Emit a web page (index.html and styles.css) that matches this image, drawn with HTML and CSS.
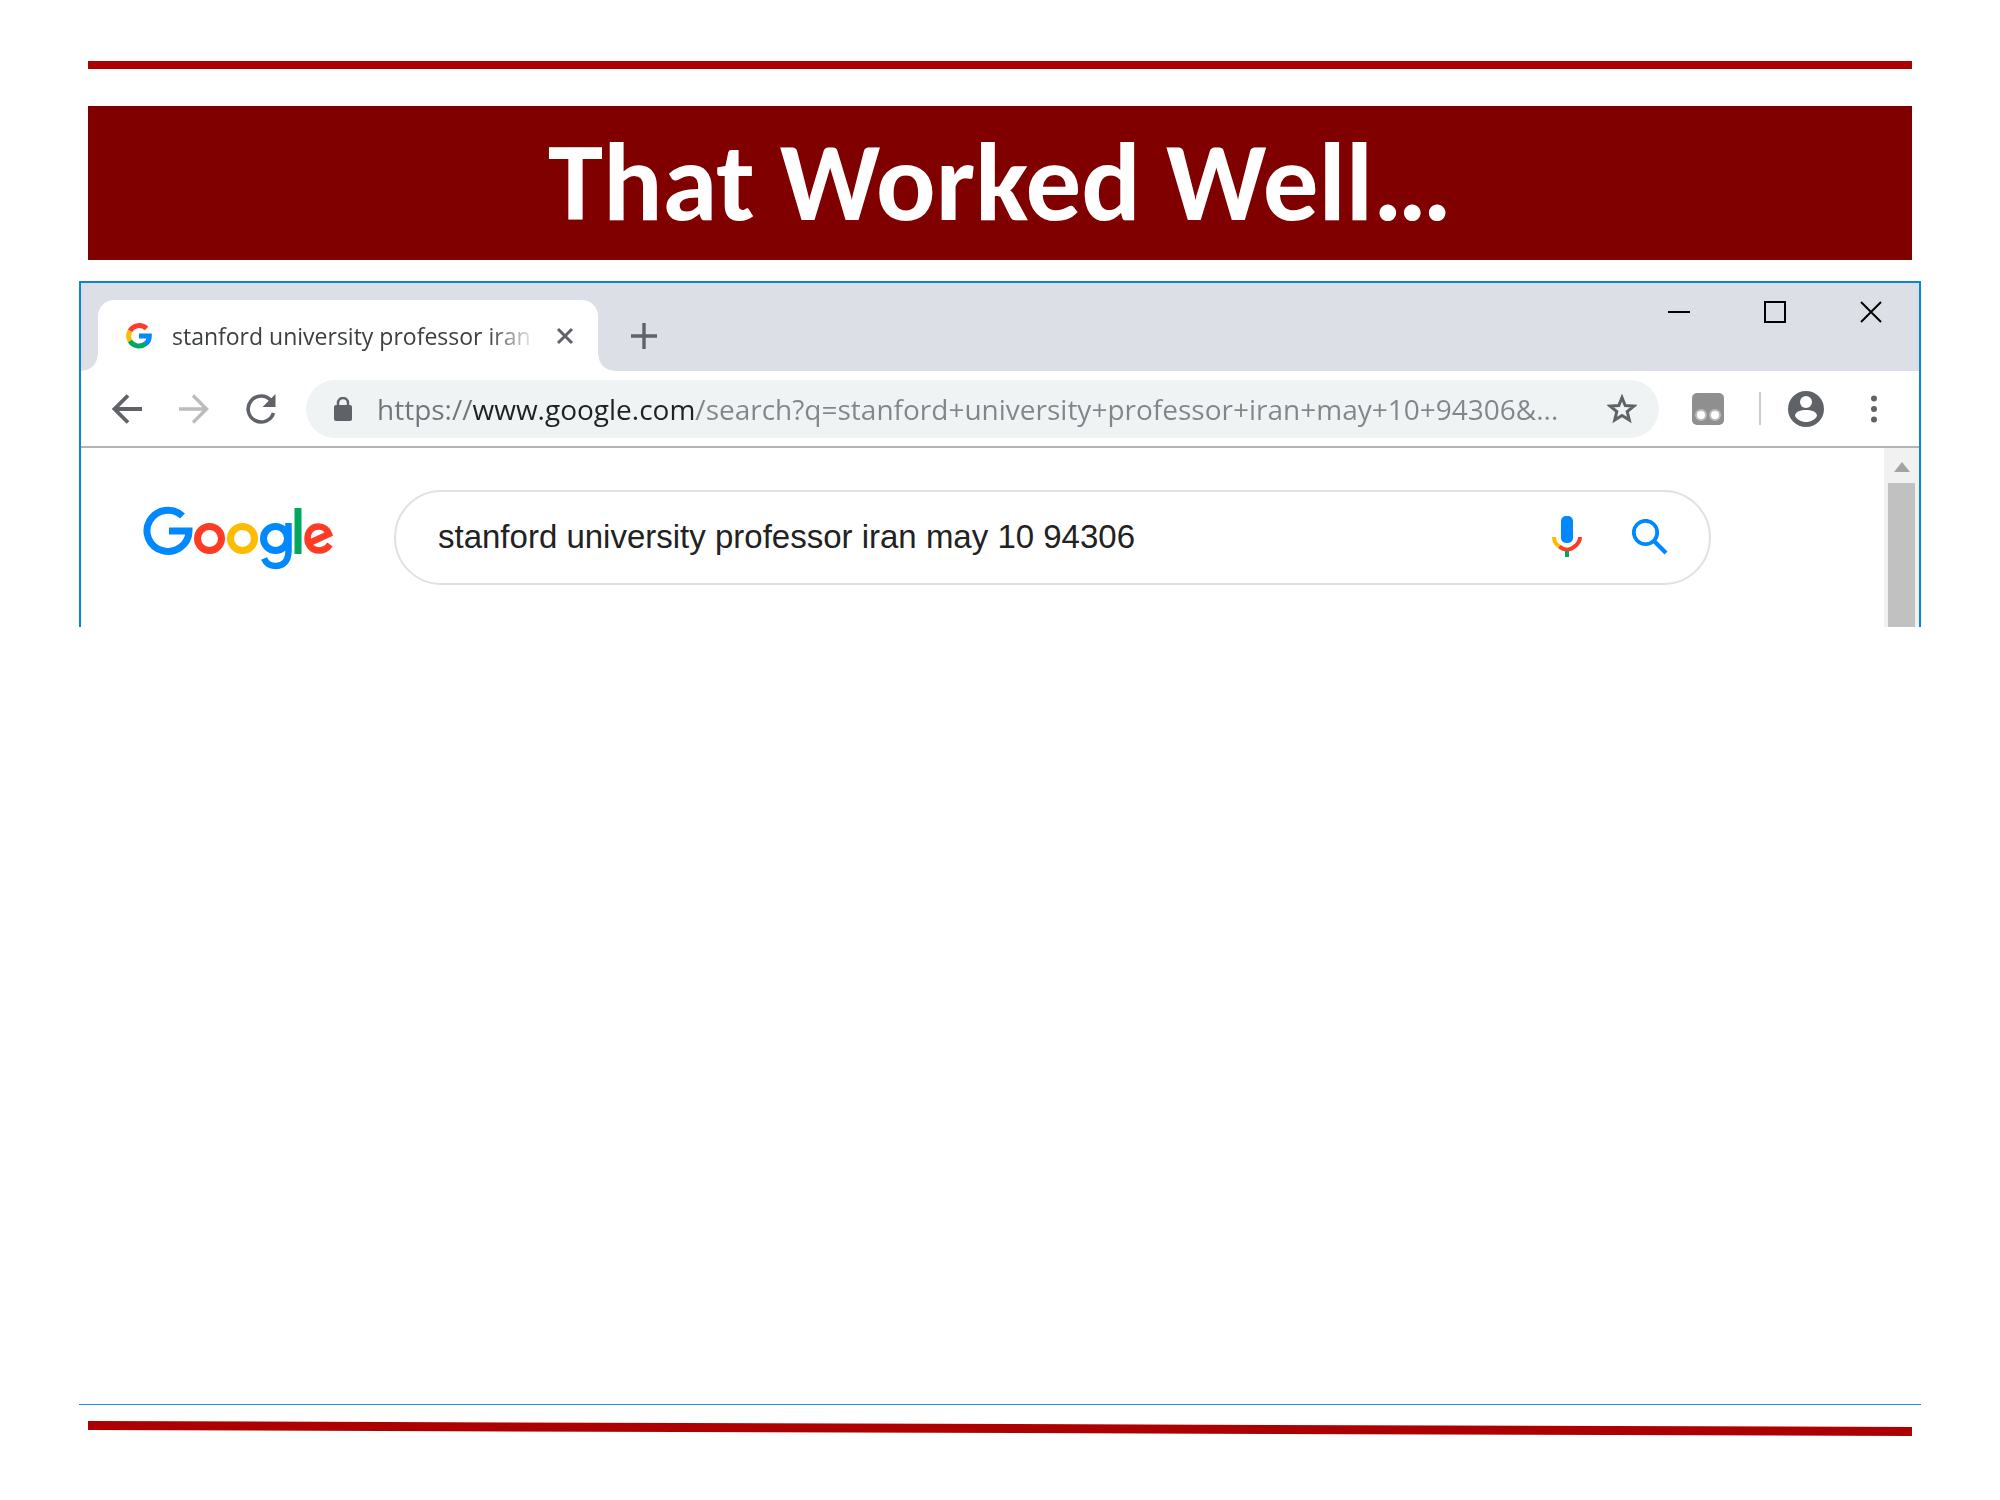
FILE: index.html
```
<!DOCTYPE html>
<html lang="en">
<head>
    <meta charset="UTF-8">
    <title>That Worked Well…</title>
    <link rel="stylesheet" href="styles.css">
</head>
<body>
    <main class="slide">
        <!-- Slide heading -->
        <header class="heading">
            <div class="rule"></div>
            <h1 class="title">That Worked Well…</h1>
        </header>

        <!-- Browser window -->
        <section class="browser">
            <div class="tabstrip">
                <div class="tab">
                    <svg class="favicon" viewBox="0 0 26 26" aria-hidden="true">
                        <g fill="none" stroke-width="5">
                            <path d="M4 8A10.500 10.500 0 0 1 20.500 5.500" stroke="#ff3b30"/>
                            <path d="M4 18A10.500 10.500 0 0 1 4 8" stroke="#fbbc05"/>
                            <path d="M4 18A10.500 10.500 0 0 0 19.500 20.800" stroke="#00a95c"/>
                            <path d="M13 13H23.300C23.300 17 21.800 19.500 19.200 21" stroke="#0088ff"/>
                        </g>
                    </svg>
                    <span class="tab-title">stanford university professor iran</span>
                    <button type="button" class="icon-btn tab-close" aria-label="Close tab">
                        <svg viewBox="0 0 18 18" width="18" height="18"><path d="M2 2L16 16M16 2L2 16" stroke="#5f6368" stroke-width="3"/></svg>
                    </button>
                </div>
                <button type="button" class="icon-btn new-tab" aria-label="New tab">
                    <svg viewBox="0 0 26 26" width="26" height="26"><path d="M13 0V26M0 13H26" stroke="#5f6368" stroke-width="3.400"/></svg>
                </button>
                <div class="window-controls">
                    <button type="button" class="icon-btn" aria-label="Minimize">
                        <svg viewBox="0 0 22 22" width="22" height="22"><path d="M0 11H22" stroke="#000" stroke-width="2"/></svg>
                    </button>
                    <button type="button" class="icon-btn" aria-label="Maximize">
                        <svg viewBox="0 0 22 22" width="22" height="22"><path d="M1 1H21V21H1Z" fill="none" stroke="#000" stroke-width="2"/></svg>
                    </button>
                    <button type="button" class="icon-btn" aria-label="Close">
                        <svg viewBox="0 0 22 22" width="22" height="22"><path d="M1 1L21 21M21 1L1 21" stroke="#000" stroke-width="2"/></svg>
                    </button>
                </div>
            </div>

            <div class="toolbar">
                <div class="nav">
                    <button type="button" class="icon-btn" aria-label="Back">
                        <svg viewBox="0 0 30 30" width="30" height="30"><path d="M30 15H3M16 1.500L2.500 15L16 28.500" fill="none" stroke="#5f6368" stroke-width="3.800"/></svg>
                    </button>
                    <button type="button" class="icon-btn" aria-label="Forward">
                        <svg viewBox="0 0 30 30" width="30" height="30"><path d="M0 15H27M14 1.500L27.500 15L14 28.500" fill="none" stroke="#babcbe" stroke-width="3.400"/></svg>
                    </button>
                    <button type="button" class="icon-btn" aria-label="Reload">
                        <svg viewBox="0 0 30 30" width="30" height="30"><path d="M27.500 19A13 13 0 1 1 25 6.500" fill="none" stroke="#5f6368" stroke-width="3.600"/><path d="M29.500 0V13H16.500Z" fill="#5f6368"/></svg>
                    </button>
                </div>
                <div class="address">
                    <svg viewBox="0 0 18 24" width="18" height="24" aria-hidden="true"><rect y="8" width="18" height="16" rx="2" fill="#5f6368"/><path d="M4 9V6A5 5 0 0 1 14 6V9" fill="none" stroke="#5f6368" stroke-width="2.400"/></svg>
                    <input class="url" type="text" aria-label="Address" value="https://www.google.com/search?q=stanford+university+professor+iran+may+10+94306&amp;...">
                    <button type="button" class="icon-btn" aria-label="Bookmark this page">
                        <svg viewBox="0 0 30 30" width="30" height="30"><path d="M15 3.500L18.200 11.500L26.800 12.100L20.200 17.600L22.300 26L15 21.400L7.700 26L9.800 17.600L3.200 12.100L11.800 11.500Z" fill="none" stroke="#5f6368" stroke-width="3"/></svg>
                    </button>
                </div>
                <button type="button" class="icon-btn extension" aria-label="Extension">
                    <svg viewBox="0 0 34 34" width="34" height="34"><rect x="1" y="1" width="32" height="32" rx="5" fill="#8f8f8f"/><circle cx="10" cy="23" r="5" fill="#fff" stroke="#bbb" stroke-width="2"/><circle cx="24" cy="23" r="5" fill="#fff" stroke="#bbb" stroke-width="2"/></svg>
                </button>
                <div class="divider"></div>
                <button type="button" class="icon-btn profile" aria-label="Profile">
                    <svg viewBox="0 0 36 36" width="36" height="36"><circle cx="18" cy="18" r="18" fill="#5f6368"/><circle cx="18" cy="11" r="6" fill="#fff"/><path d="M7 25C7 20.500 13 19 18 19S29 20.500 29 25C27 28.500 23 31 18 31S9 28.500 7 25Z" fill="#fff"/></svg>
                </button>
                <button type="button" class="icon-btn menu" aria-label="Menu">
                    <svg viewBox="0 0 8 28" width="8" height="28"><g fill="#5f6368"><circle cx="4" cy="3.500" r="3"/><circle cx="4" cy="14" r="3"/><circle cx="4" cy="24.500" r="3"/></g></svg>
                </button>
            </div>

            <div class="page">
                <form class="search">
                    <a class="logo" href="#" aria-label="Google">
                        <svg viewBox="0 0 190 66" width="190" height="66">
                            <g fill="none" stroke-width="7">
                                <path d="M39.500 11A21 20.500 0 1 0 46 26H26" stroke="#0088ff"/>
                                <circle cx="66.500" cy="33.500" r="12" stroke="#ff3b25"/>
                                <circle cx="99.500" cy="33.500" r="12" stroke="#ffbb00"/>
                                <circle cx="132.500" cy="33.500" r="12" stroke="#0088ff"/>
                                <path d="M145.500 18V46C145.500 56 140 61 132.500 61C127 61 123 58 121 53.500" stroke="#0088ff" stroke-width="6.500"/>
                                <path d="M155 3V49" stroke="#00a95c"/>
                                <path d="M163 39.500L186 29C184.500 24.500 180.500 21.500 175.500 21.500C169 21.500 164.500 26.500 164.500 33.500C164.500 40.500 169.500 45.500 176 45.500C181 45.500 184.500 43 187 39.500" stroke="#ff3b25" stroke-width="6.500"/>
                            </g>
                        </svg>
                    </a>
                    <div class="search-box">
                        <input class="query" type="text" aria-label="Search" value="stanford university professor iran may 10 94306">
                        <button type="button" class="icon-btn" aria-label="Search by voice">
                            <svg viewBox="0 0 30 42" width="30" height="42"><rect x="9" y="0" width="12" height="27" rx="5" fill="#0088ff"/><g fill="none" stroke-width="4"><path d="M2 21C2 25.500 4.500 29 8 31" stroke="#ffbb00"/><path d="M7.500 30.500C12 34.500 18 34.500 22.500 30.500C26 28 28 25 28 21" stroke="#ff3b25"/><path d="M15 35V41" stroke="#00a95c"/></g></svg>
                        </button>
                        <button type="submit" class="icon-btn" aria-label="Google Search">
                            <svg viewBox="0 0 36 36" width="36" height="36"><circle cx="13.500" cy="13.500" r="11.700" fill="none" stroke="#0088ff" stroke-width="3.800"/><path d="M22 22L34 34" stroke="#0088ff" stroke-width="4.200"/></svg>
                        </button>
                    </div>
                </form>
                <div class="scrollbar">
                    <svg viewBox="0 0 16 10" width="16" height="10" aria-hidden="true"><path d="M8 0L16 10H0Z" fill="#a3a3a3"/></svg>
                    <div class="thumb"></div>
                </div>
            </div>
        </section>

        <!-- Bottom rules, the thick one tilts slightly -->
        <footer class="footer">
            <svg class="tilted" viewBox="0 0 1823 16" preserveAspectRatio="none" aria-hidden="true"><path d="M0 0L1823 6V15L0 9Z" fill="#ad0000"/></svg>
        </footer>
    </main>
</body>
</html>
```
FILE: styles.css
```
* {
    box-sizing: border-box;
}

body {
    margin: 0;
    background-color: #fff;
    font-family: "Open Sans", "Noto Sans", sans-serif;
}

.slide {
    display: flex;
    flex-direction: column;
    min-height: 100vh;
    padding: 61px 79px 63px;
}

/* heading */
.heading {
    margin: 0 9px 21px;
}

.rule {
    height: 8px;
    margin-bottom: 37px;
    background-color: #ad0000;
}

.title {
    margin: 0;
    padding: 16px 0 18px;
    background-color: #800000;
    color: #fff;
    font-family: Carlito, Lato, sans-serif;
    font-size: 111px;
    font-weight: bold;
    line-height: 120px;
    text-align: center;
}

/* browser window */
.browser {
    border: 2px solid #0a84d8;
    border-bottom: none;
}

.icon-btn {
    display: flex;
    flex: none;
    align-items: center;
    justify-content: center;
    padding: 0;
    border: none;
    background: none;
    cursor: pointer;
}

.icon-btn svg {
    display: block;
}

.tabstrip {
    display: flex;
    height: 88px;
    padding: 17px 37px 0 17px;
    background-color: #dddfe7;
}

.tab {
    position: relative;
    display: flex;
    align-items: center;
    width: 500px;
    padding: 0 24px 0 28px;
    border-radius: 16px 16px 0 0;
    background-color: #fff;
}

/* curved feet of the active tab */
.tab::before,
.tab::after {
    content: "";
    position: absolute;
    bottom: 0;
    width: 16px;
    height: 16px;
}

.tab::before {
    right: 100%;
    background: radial-gradient(circle at 0 0, transparent 15px, #fff 16px);
}

.tab::after {
    left: 100%;
    background: radial-gradient(circle at 100% 0, transparent 15px, #fff 16px);
}

.favicon {
    flex: none;
    width: 26px;
    height: 26px;
    margin-right: 20px;
}

.tab-title {
    flex: 1;
    overflow: hidden;
    color: #3c4043;
    font-size: 23px;
    line-height: 36px;
    white-space: nowrap;
    -webkit-mask-image: linear-gradient(to left, transparent, #000 50px);
    mask-image: linear-gradient(to left, transparent, #000 50px);
}

.tab-close {
    margin-left: 18px;
}

.new-tab {
    margin-left: 33px;
}

.window-controls {
    display: flex;
    gap: 74px;
    height: 24px;
    margin-left: auto;
}

.toolbar {
    display: flex;
    align-items: center;
    height: 77px;
    padding: 0 41px 0 31px;
    border-bottom: 2px solid #b3b3b3;
    background-color: #fff;
}

.nav {
    display: flex;
    gap: 37px;
}

.address {
    display: flex;
    flex: 1;
    align-items: center;
    height: 58px;
    margin-left: 30px;
    padding: 0 22px 0 28px;
    border-radius: 29px;
    background-color: #f0f3f4;
}

/* the host name is darker than the rest of the address */
.url {
    flex: 1;
    min-width: 0;
    margin: 0 20px 0 25px;
    padding: 0;
    border: none;
    outline: none;
    background: linear-gradient(to right, #6f767b 95px, #202124 95px, #202124 319px, #80868b 319px);
    -webkit-background-clip: text;
    background-clip: text;
    color: #80868b;
    -webkit-text-fill-color: transparent;
    font: 28px/40px "Open Sans", "Noto Sans", sans-serif;
}

.extension {
    margin-left: 32px;
}

.divider {
    width: 2px;
    height: 33px;
    margin: 0 27px 0 34px;
    background-color: #c8cccf;
}

.menu {
    margin-left: 46px;
}

/* page inside the window */
.page {
    display: flex;
    height: 179px;
}

.search {
    display: flex;
    flex: 1;
    align-items: flex-start;
    padding: 42px 173px 0 62px;
}

.logo {
    margin: 15px 61px 0 0;
}

.logo svg {
    display: block;
}

.search-box {
    display: flex;
    flex: 1;
    align-items: center;
    height: 95px;
    padding: 0 41px 2px 42px;
    border: 2px solid #dfe1e5;
    border-radius: 48px;
}

.query {
    flex: 1;
    min-width: 0;
    padding: 0;
    border: none;
    outline: none;
    background: none;
    color: #222;
    font: 33px/40px "Liberation Sans", Arial, sans-serif;
}

.search-box .icon-btn + .icon-btn {
    margin-left: 50px;
}

.scrollbar {
    display: flex;
    flex-direction: column;
    align-items: center;
    width: 35px;
    padding-top: 14px;
    background-color: #f1f1f1;
}

.thumb {
    flex: 1;
    width: 27px;
    margin-top: 11px;
    background-color: #c1c1c1;
}

/* footer */
.footer {
    margin-top: auto;
    padding: 16px 9px 0;
    border-top: 1px solid #2b8fdd;
}

.tilted {
    display: block;
    width: 100%;
    height: 16px;
}
```
